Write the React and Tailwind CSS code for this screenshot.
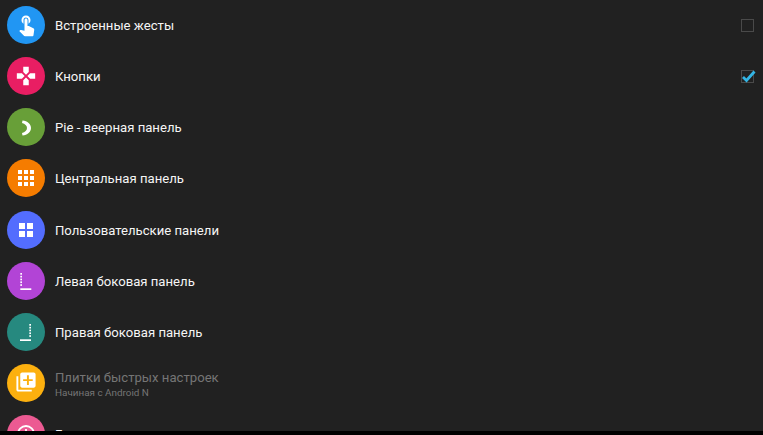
const font = { fontFamily: "Roboto" };

function Touch() {
  return (
    <svg width="24" height="24" viewBox="0 0 24 24" fill="white" className="-translate-y-[0.5px] translate-x-[0.5px]">
      <path d="M9 11.24V7.5a2.5 2.5 0 0 1 5 0v3.74c1.21-.81 2-2.18 2-3.74C16 5.01 13.99 3 11.5 3S7 5.01 7 7.5c0 1.56.79 2.93 2 3.74zm9.84 4.63l-4.54-2.26c-.17-.07-.35-.11-.54-.11H13v-6c0-.83-.67-1.5-1.5-1.5S10 6.67 10 7.5v10.74l-3.43-.72c-.08-.01-.15-.03-.24-.03-.31 0-.59.13-.79.33l-.79.8 4.94 4.94c.27.27.65.44 1.06.44h6.79c.75 0 1.33-.55 1.44-1.28l.75-5.27c.01-.07.02-.14.02-.2 0-.62-.38-1.16-.91-1.38z" />
    </svg>
  );
}

function Gamepad() {
  return (
    <svg width="22" height="22" viewBox="0 0 24 24" fill="white">
      <path d="M15 7.5V2H9v5.5l3 3 3-3zM7.5 9H2v6h5.5l3-3-3-3zM9 16.5V22h6v-5.5l-3-3-3 3zM16.5 9l-3 3 3 3H22V9h-5.5z" />
    </svg>
  );
}

function PieIcon() {
  return (
    <svg width="24" height="24" viewBox="0 0 24 24" fill="white">
      <path d="M8.500 5.500C13.500 6 17 9 17 13S13.500 20 8.500 20.500L8 18C11 17 13 15.500 13 13S11 9 8 8z" />
    </svg>
  );
}

function Grid3() {
  const cells = [];
  for (let y = 0; y < 3; y++) {
    for (let x = 0; x < 3; x++) {
      cells.push(<rect key={`${x}-${y}`} x={4 + x * 6} y={4 + y * 6} width="4" height="4" />);
    }
  }
  return <svg width="24" height="24" viewBox="0 0 24 24" fill="white">{cells}</svg>;
}

function Grid2() {
  return (
    <svg width="24" height="24" viewBox="0 0 24 24" fill="white">
      <rect x="5" y="5" width="6" height="6" />
      <rect x="13" y="5" width="6" height="6" />
      <rect x="5" y="13" width="6" height="6" />
      <rect x="13" y="13" width="6" height="6" />
    </svg>
  );
}

function Dots({ x }) {
  return [4, 6.800, 9.600, 12.400, 15.200].map((y) => (
    <rect key={y} x={x} y={y} width="1.700" height="1.700" />
  ));
}

function LeftBar() {
  return (
    <svg width="24" height="24" viewBox="0 0 24 24" fill="white">
      <Dots x={6.300} />
      <rect x="6.300" y="19.300" width="11" height="1.700" />
    </svg>
  );
}

function RightBar() {
  return (
    <svg width="24" height="24" viewBox="0 0 24 24" fill="white">
      <Dots x={15.300} />
      <rect x="6" y="19.300" width="11" height="1.700" />
    </svg>
  );
}

function Tiles() {
  return (
    <svg width="23" height="23" viewBox="0 0 24 24" fill="white" className="-translate-x-[0.5px] -translate-y-[0.5px]">
      <path d="M4 6H2v14c0 1.100.9 2 2 2h14v-2H4V6zm16-4H8c-1.100 0-2 .9-2 2v12c0 1.100.9 2 2 2h12c1.100 0 2-.9 2-2V4c0-1.100-.9-2-2-2zm-1 9h-4v4h-2v-4H9V9h4V5h2v4h4v2z" />
    </svg>
  );
}

function Last() {
  return (
    <svg width="24" height="24" viewBox="0 0 24 24" fill="none" stroke="white" strokeWidth="1.800">
      <circle cx="12" cy="12" r="8" />
      <path d="M12 7v5" />
    </svg>
  );
}

function Row({ color, icon, title, sub, dim, check }) {
  return (
    <div className="flex h-[51.125px] shrink-0 items-center pl-[7px] pr-[9px]">
      <div className={`flex h-[38px] w-[38px] shrink-0 items-center justify-center rounded-full ${color}`}>
        {icon}
      </div>
      <div className={`ml-[10px] flex-1 ${sub ? "pt-[3px]" : "pt-[2px]"}`}>
        <div className={`text-[13.150px] leading-[16px] ${dim ? "text-[#757575]" : "text-[#f5f5f5]"}`}>{title}</div>
        {sub && <div className="text-[9.900px] leading-[13px] text-[#757575]">{sub}</div>}
      </div>
      {check === false && <div className="h-[13px] w-[13px] border border-[#4a4a4a]"></div>}
      {check === true && (
        <div className="relative h-[13px] w-[13px] border border-[#4a4a4a]">
          <svg className="absolute -left-[1px] -top-[2px]" width="16" height="15" viewBox="0 0 16 15" fill="none" stroke="#33b5e5" strokeWidth="2.800">
            <path d="M2 8l3.500 3.500L13.500 2.500" />
          </svg>
        </div>
      )}
    </div>
  );
}

export default function App() {
  return (
    <div className="flex h-[435px] w-[763px] flex-col overflow-hidden bg-black" style={font}>
      <div className="h-[431px] overflow-hidden bg-[#212121]">
        <div className="-mt-[0.5px]">
          <Row color="bg-[#2196f3]" icon={<Touch />} title="Встроенные жесты" check={false} />
          <Row color="bg-[#e91e63]" icon={<Gamepad />} title="Кнопки" check={true} />
          <Row color="bg-[#689f38]" icon={<PieIcon />} title="Pie - веерная панель" />
          <Row color="bg-[#f57c00]" icon={<Grid3 />} title="Центральная панель" />
          <Row color="bg-[#536dfe]" icon={<Grid2 />} title="Пользовательские панели" />
          <Row color="bg-[#b244d6]" icon={<LeftBar />} title="Левая боковая панель" />
          <Row color="bg-[#26897f]" icon={<RightBar />} title="Правая боковая панель" />
          <Row color="bg-[#fcb00f]" icon={<Tiles />} title="Плитки быстрых настроек" sub="Начиная с Android N" dim />
          <Row color="bg-[#ec5a92]" icon={<Last />} title="Г" />
        </div>
      </div>
    </div>
  );
}
